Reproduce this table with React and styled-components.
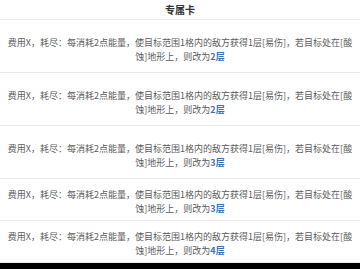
import React from 'react';
import styled, { createGlobalStyle } from 'styled-components';

const GlobalStyle = createGlobalStyle`
  html, body {
    margin: 0;
    padding: 0;
    background: #fff;
  }
  body {
    font-family: "Noto Sans CJK SC", "Noto Sans", sans-serif;
  }
`;

const Page = styled.div`
  width: 360px;
  display: flex;
  flex-direction: column;
`;

const Header = styled.div`
  height: 20px;
  display: flex;
  align-items: center;
  justify-content: center;
  border-bottom: 1px solid #ebebeb;
  box-sizing: border-box;
  font-size: 10px;
  font-weight: 700;
  color: #333;
`;

const Row = styled.div`
  box-sizing: border-box;
  height: ${props => (props.$tall ? '53px' : '42px')};
  padding: ${props => (props.$tall ? '16px 6px 0' : '9px 6px 0')};
  border-bottom: 1px solid #ebebeb;
  text-align: center;
  font-size: 9px;
  line-height: 14px;
  color: #5c5c5c;
`;

const Stack = styled.span`
  color: #3a72b8;
  font-weight: 700;
`;

const Footer = styled.div`
  height: 8px;
  background: #000;
`;

const rows = [
  { layers: 2, tall: true },
  { layers: 2, tall: true },
  { layers: 3, tall: true },
  { layers: 3, tall: false },
  { layers: 4, tall: false },
];

const App = () => {
  return (
    <Page>
      <GlobalStyle />
      <Header>专属卡</Header>
      {rows.map((r, i) => (
        <Row key={i} $tall={r.tall}>
          费用X，耗尽：每消耗2点能量，使目标范围1格内的敌方获得1层[易伤]，若目标处在[酸蚀]地形上，则改为
          <Stack>{r.layers}层</Stack>
        </Row>
      ))}
      <Footer />
    </Page>
  );
};

export default App;
